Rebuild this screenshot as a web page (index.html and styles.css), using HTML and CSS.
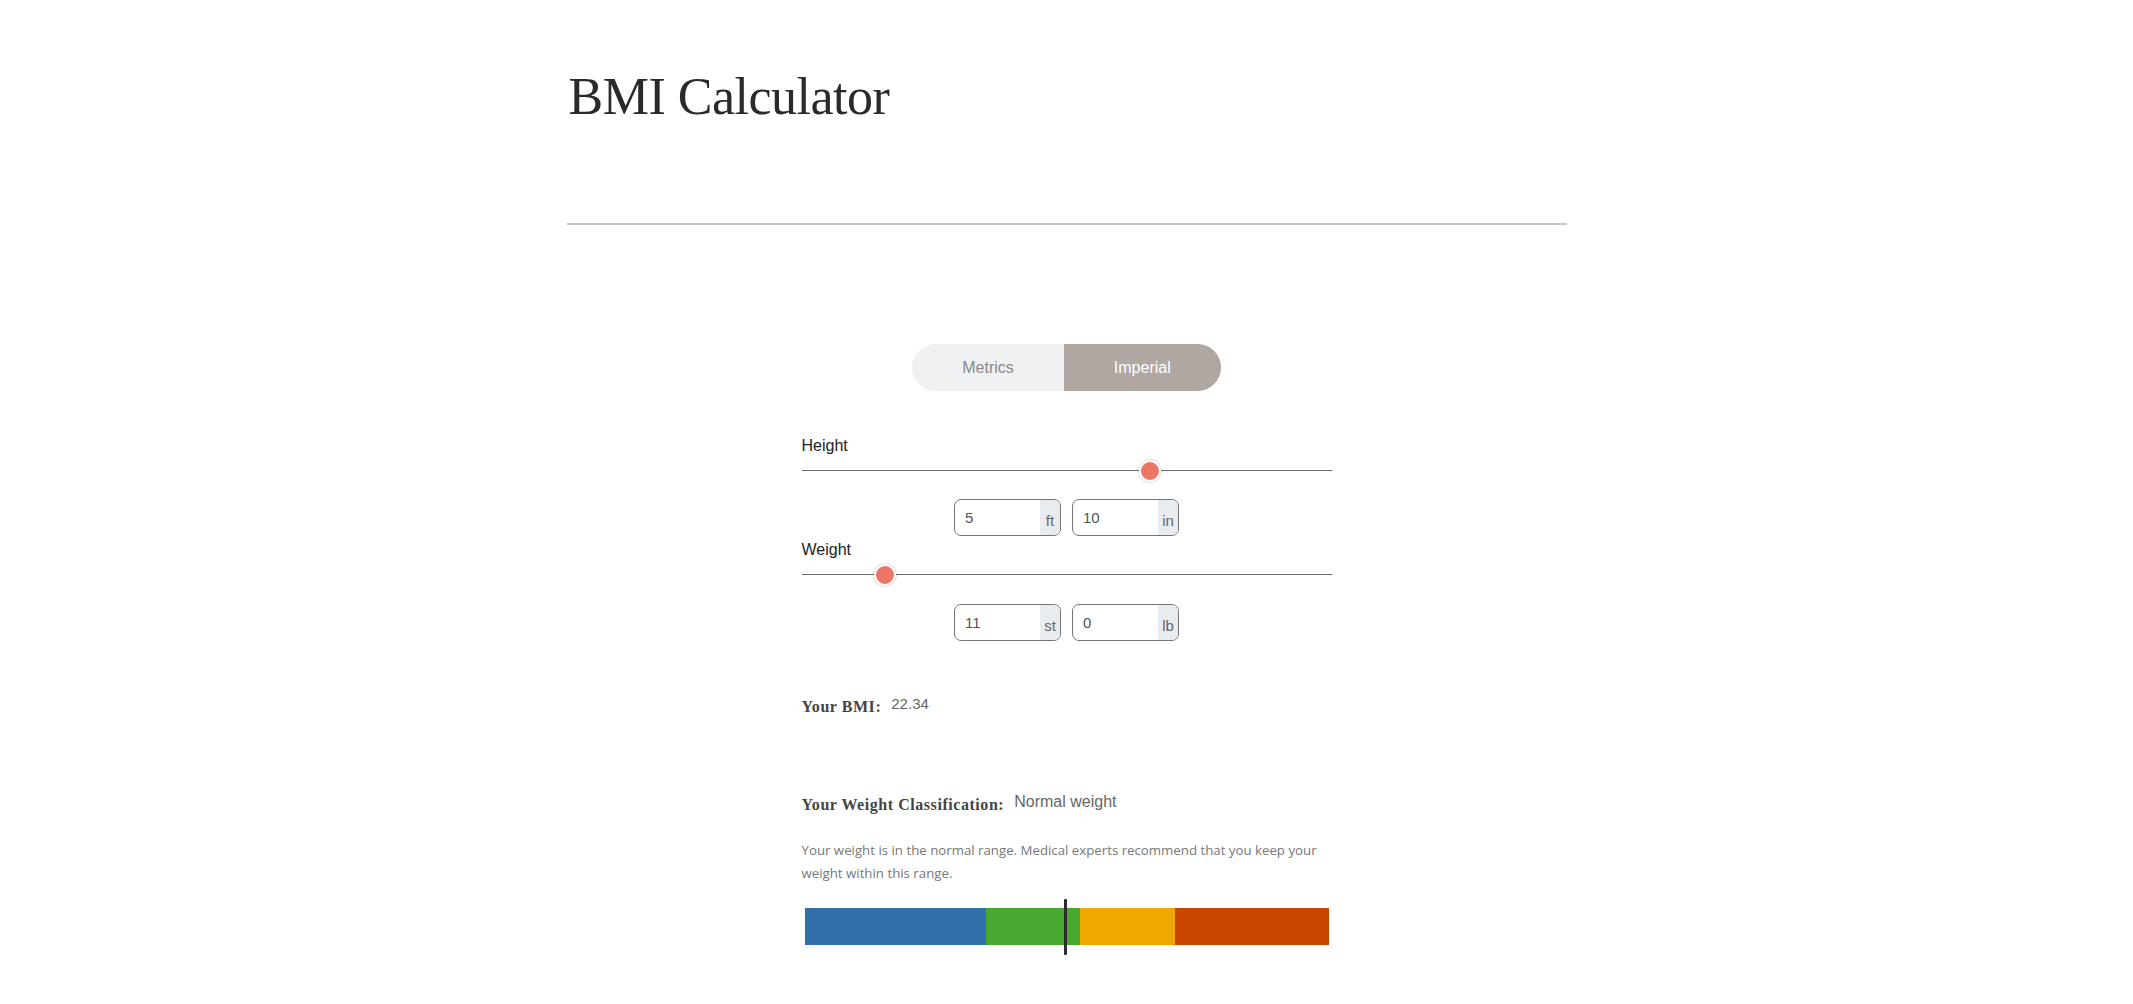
FILE: index.html
```html
<!DOCTYPE html>
<html lang="en">
<head>
<meta charset="utf-8">
<title>BMI Calculator</title>
<link rel="stylesheet" href="styles.css">
</head>
<body>
<div class="page">
  <h1 class="title">BMI Calculator</h1>
  <hr class="rule">
  <div class="calc">
    <div class="toggle-wrap">
      <div class="toggle">
        <span class="toggle-btn">Metrics</span>
        <span class="toggle-btn active">Imperial</span>
      </div>
    </div>

    <div class="field-label field-height">Height</div>
    <div class="slider"><div class="track"></div><div class="thumb" style="left: 65.8%"></div></div>
    <div class="boxes boxes-height">
      <div class="box"><span class="val">5</span><span class="unit">ft</span></div>
      <div class="box"><span class="val">10</span><span class="unit">in</span></div>
    </div>

    <div class="field-label field-weight">Weight</div>
    <div class="slider"><div class="track"></div><div class="thumb" style="left: 15.8%"></div></div>
    <div class="boxes boxes-weight">
      <div class="box"><span class="val">11</span><span class="unit">st</span></div>
      <div class="box"><span class="val">0</span><span class="unit">lb</span></div>
    </div>

    <div class="result result-bmi">
      <span class="result-label">Your BMI:</span>
      <span class="result-value">22.34</span>
    </div>
    <div class="result result-class">
      <span class="result-label">Your Weight Classification:</span>
      <span class="result-value">Normal weight</span>
    </div>
    <p class="desc">Your weight is in the normal range. Medical experts recommend that you keep your weight within this range.</p>

    <div class="scale-wrap">
      <div class="scale">
        <div class="seg seg-blue" style="width: 34.6%"></div>
        <div class="seg seg-green" style="width: 17.8%"></div>
        <div class="seg seg-yellow" style="width: 18.2%"></div>
        <div class="seg seg-red" style="width: 29.4%"></div>
      </div>
      <div class="marker" style="left: 49.7%"></div>
    </div>
  </div>
</div>
</body>
</html>
```

FILE: styles.css
```css
* { box-sizing: border-box; }

body {
  margin: 0;
  background: #ffffff;
  font-family: "Liberation Sans", Arial, sans-serif;
  color: #222;
}

.page {
  width: 1000px;
  margin: 0 auto;
}

.title {
  margin: 0;
  padding-top: 66px;
  padding-left: 2px;
  font-family: "Liberation Serif", "Times New Roman", serif;
  font-weight: normal;
  font-size: 52px;
  line-height: 1.2;
  letter-spacing: -0.5px;
  color: #2a2a2a;
}

.rule {
  margin: 95px 0 0 0;
  border: 0;
  height: 2px;
  background: #c6c6c6;
}

.calc {
  width: 530px;
  margin: 0 auto;
  padding-top: 119px;
  padding-bottom: 40px;
}

.toggle-wrap {
  display: flex;
  justify-content: center;
}

.toggle {
  display: flex;
  height: 47px;
  border-radius: 24px;
  overflow: hidden;
  background: #eef0f2;
}

.toggle-btn {
  display: flex;
  align-items: center;
  padding: 0 50px;
  font-size: 16px;
  color: #8a8a8a;
}

.toggle-btn.active {
  background: #b0a7a2;
  color: #ffffff;
}

.field-label {
  margin-bottom: 3px;
  font-size: 16px;
  line-height: 20px;
  color: #222;
}

.field-height {
  margin-top: 45px;
}

.field-weight {
  margin-top: 4px;
}

.slider {
  position: relative;
  height: 24px;
}

.track {
  position: absolute;
  left: 0;
  right: 0;
  top: 11px;
  height: 1px;
  background: #6e6e6e;
}

.thumb {
  position: absolute;
  top: 1px;
  width: 22px;
  height: 22px;
  margin-left: -11px;
  border-radius: 50%;
  background: #ec7566;
  border: 2px solid #ffffff;
  box-shadow: 0 0 2px rgba(0, 0, 0, 0.35);
}

.boxes {
  display: flex;
  justify-content: center;
  gap: 11px;
}

.boxes-height {
  margin-top: 16px;
}

.boxes-weight {
  margin-top: 17px;
}

.box {
  display: flex;
  width: 107px;
  height: 37px;
  border: 1px solid #757575;
  border-radius: 7px;
  overflow: hidden;
  background: #fff;
}

.val {
  flex: 1;
  display: flex;
  align-items: center;
  padding-left: 10px;
  font-size: 15px;
  color: #555;
}

.unit {
  width: 20px;
  background: #e9ecef;
  display: flex;
  align-items: flex-end;
  justify-content: center;
  padding-bottom: 6px;
  font-size: 15px;
  color: #666;
}

.result {
  display: flex;
  align-items: flex-start;
  gap: 10px;
  line-height: 24px;
}

.result-bmi {
  margin-top: 54px;
}

.result-class {
  margin-top: 74px;
}

.result-label {
  font-family: "Liberation Serif", "Times New Roman", serif;
  font-weight: bold;
  font-size: 16px;
  letter-spacing: 0.55px;
  color: #444;
}

.result-value {
  font-size: 15px;
  line-height: 18px;
  color: #666;
}

.result-class .result-value {
  font-size: 16px;
}

.desc {
  margin: 22px 0 0 0;
  font-family: "Open Sans", "Liberation Sans", sans-serif;
  font-size: 13.25px;
  line-height: 23px;
  color: #777;
}

.scale-wrap {
  position: relative;
  margin: 14px 2px 0 3px;
  padding: 9px 0 10px 0;
}

.scale {
  display: flex;
  height: 37px;
}

.seg { height: 100%; }
.seg-blue { background: #306eac; }
.seg-green { background: #47a931; }
.seg-yellow { background: #eea800; }
.seg-red { background: #c84400; }

.marker {
  position: absolute;
  top: 0;
  bottom: 0;
  width: 3px;
  margin-left: -1px;
  background: #2c2c2c;
  border-radius: 1px;
}
```
